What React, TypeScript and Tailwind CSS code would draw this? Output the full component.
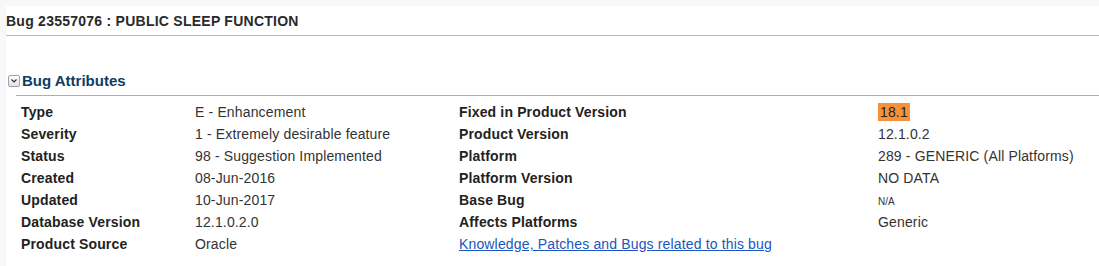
import React from "react";

const rows: [string, React.ReactNode, string, React.ReactNode][] = [
  ["Type", "E - Enhancement", "Fixed in Product Version", <span className="bg-[#f7923a] px-[2px] py-[1px] text-[#222]">18.1</span>],
  ["Severity", "1 - Extremely desirable feature", "Product Version", "12.1.0.2"],
  ["Status", "98 - Suggestion Implemented", "Platform", "289 - GENERIC (All Platforms)"],
  ["Created", "08-Jun-2016", "Platform Version", "NO DATA"],
  ["Updated", "10-Jun-2017", "Base Bug", <span className="text-[10px] tracking-normal">N/A</span>],
  ["Database Version", "12.1.0.2.0", "Affects Platforms", "Generic"],
];

export default function App() {
  return (
    <div className="w-[1099px] h-[266px] bg-[#f8f8f8] pl-[6px] pt-[6px] overflow-hidden" style={{ fontFamily: '"Liberation Sans", Arial, sans-serif' }}>
      <div className="bg-white h-full">
        <div className="h-[30px] border-b border-[#b9b9b9] flex items-center pt-[2px] text-[14px] font-bold text-[#2a2a2a] tracking-[0.25px]">
          Bug 23557076 : PUBLIC SLEEP FUNCTION
        </div>
        <div className="h-[31px]" />
        <div className="flex items-center h-[28px] pl-[2px]">
          <span className="w-[12px] h-[12px] border border-[#9aa3ad] rounded-[2px] bg-gradient-to-b from-white to-[#dde3ea] flex items-center justify-center mr-[2px]">
            <svg width="8" height="6" viewBox="0 0 8 6"><path d="M1.5 1.5 L4 4 L6.5 1.5" stroke="#333" strokeWidth="1.2" fill="none" /></svg>
          </span>
          <span className="text-[15px] font-bold text-[#0b3d66]">Bug Attributes</span>
        </div>
        <div className="ml-[10px] border-t border-[#a6afc2]" />
        <div className="grid grid-cols-[174px_264px_419px_1fr] pl-[15px] pt-[5px] text-[14px] text-[#333] tracking-[0.15px]">
          {rows.map((r, i) => (
            <React.Fragment key={i}>
              <div className="h-[22px] leading-[22px] font-bold text-[#222]">{r[0]}</div>
              <div className="h-[22px] leading-[22px]">{r[1]}</div>
              <div className="h-[22px] leading-[22px] font-bold text-[#222]">{r[2]}</div>
              <div className="h-[22px] leading-[22px]">{r[3]}</div>
            </React.Fragment>
          ))}
          <div className="h-[22px] leading-[22px] font-bold text-[#222]">Product Source</div>
          <div className="h-[22px] leading-[22px]">Oracle</div>
          <div className="h-[22px] leading-[22px] col-span-2">
            <a href="#" className="text-[#1a55c0] underline">Knowledge, Patches and Bugs related to this bug</a>
          </div>
        </div>
      </div>
    </div>
  );
}
